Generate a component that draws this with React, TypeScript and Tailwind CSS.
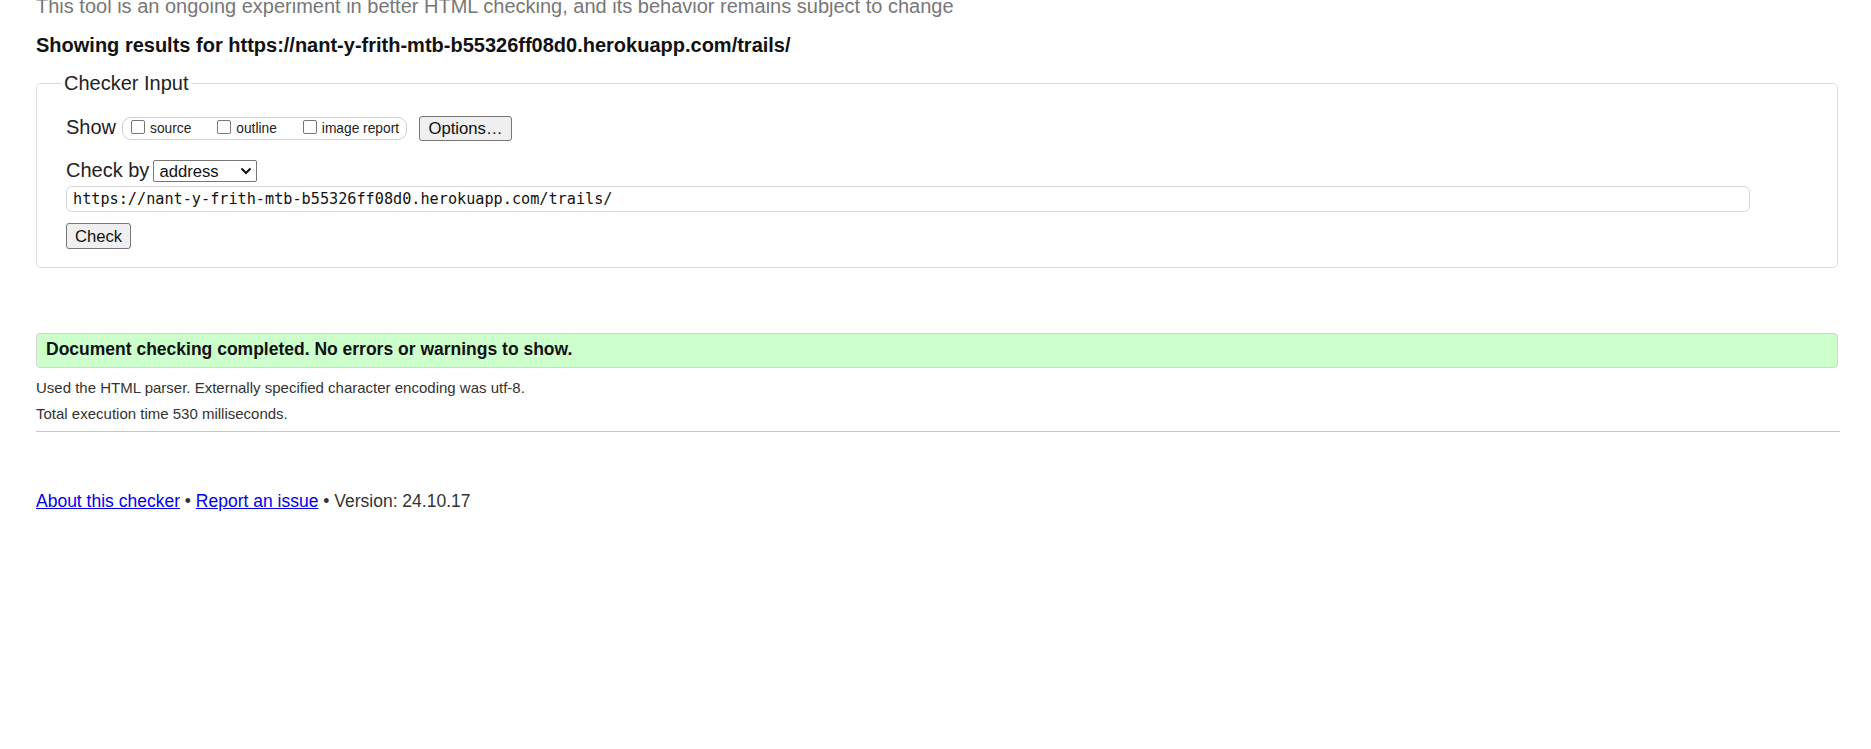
import React from 'react';

function Checkbox({ label, first }: { label: string; first?: boolean }) {
  return (
    <label className={`flex items-center ${first ? '' : 'ml-[26px]'}`}>
      <input
        type="checkbox"
        className="appearance-none m-0 mb-[3px] w-[14px] h-[14px] border border-[#767676] rounded-[2px] bg-white"
      />
      <span className="ml-[5px] text-[13.75px] leading-[16px] text-[#222]">{label}</span>
    </label>
  );
}

function Chevron() {
  return (
    <svg width="12" height="8" viewBox="0 0 12 8" className="ml-auto mr-[4px]">
      <polyline points="1.5,1.5 6,6 10.5,1.5" fill="none" stroke="#111" strokeWidth="2" />
    </svg>
  );
}

export default function App() {
  const url = 'https://nant-y-frith-mtb-b55326ff08d0.herokuapp.com/trails/';

  return (
    <div className="min-h-screen bg-white font-['Liberation_Sans',Arial,sans-serif] text-[#222] overflow-hidden">
      <div className="pl-[36px] w-[1840px]">
        <p className="-mt-[5px] text-[20px] leading-[22px] text-[#777]">
          This tool is an ongoing experiment in better HTML checking, and its behavior remains subject to change
        </p>

        <h2 className="mt-[17px] text-[20px] leading-[22px] font-bold text-[#111]">
          Showing results for {url}
        </h2>

        {/* Checker input */}
        <fieldset className="mt-[16px] w-[1802px] border border-[#dcdcdc] rounded-[5px] pl-[25px] pb-[18px]">
          <legend className="px-[2px] text-[20px] leading-[22px] text-[#222]">Checker Input</legend>

          <div className="ml-[4px] pt-[22px]">
            <div className="flex items-start h-[25px]">
              <span className="text-[20px] leading-[22px]">Show</span>
              <div className="ml-[6px] mt-[1px] h-[23px] flex items-center border border-[#cfcfcf] rounded-[9px] pl-[8px] pr-[7px]">
                <Checkbox label="source" first />
                <Checkbox label="outline" />
                <Checkbox label="image report" />
              </div>
              <button className="ml-[12px] w-[93px] h-[25px] flex items-center justify-center bg-[#efefef] border border-[#767676] rounded-[3px] text-[16.67px] leading-[19px] text-[#111]">
                Options…
              </button>
            </div>

            <div className="mt-[18px] flex items-start">
              <span className="text-[20px] leading-[22px]">Check by</span>
              <div className="ml-[4px] mt-[1px] w-[104px] h-[22px] flex items-center border border-[#767676] rounded-[2px] bg-white pl-[5px] text-[16.67px] leading-[19px] text-[#111]">
                address
                <Chevron />
              </div>
            </div>

            <div className="mt-[4px] w-[1684px] h-[26px] flex items-center border border-[#d6d6d6] rounded-[6px] pl-[6px] font-['DejaVu_Sans_Mono',monospace] text-[15.2px] text-[#111]">
              {url}
            </div>

            <button className="mt-[11px] w-[65px] h-[26px] flex items-center justify-center bg-[#efefef] border border-[#767676] rounded-[3px] text-[16.67px] leading-[19px] text-[#111]">
              Check
            </button>
          </div>
        </fieldset>

        {/* Result */}
        <div className="mt-[65px] w-[1802px] h-[35px] bg-[#ccffcc] border border-[#d4d4d4] rounded-[4px] pl-[9px] pt-[5px] text-[17.5px] leading-[20px] font-bold text-[#111]">
          Document checking completed. No errors or warnings to show.
        </div>

        <p className="mt-[10px] text-[15px] leading-[20px] text-[#333]">
          Used the HTML parser. Externally specified character encoding was utf-8.
        </p>
        <p className="mt-[6px] text-[15px] leading-[20px] text-[#333]">Total execution time 530 milliseconds.</p>

        <hr className="mt-[7px] border-0 border-t border-[#c8c8c8]" />

        <p className="mt-[59px] text-[17.5px] leading-[20px] text-[#333]">
          <a href="#" className="text-[#0000ee] underline">About this checker</a>
          {' • '}
          <a href="#" className="text-[#0000ee] underline">Report an issue</a>
          {' • Version: 24.10.17'}
        </p>
      </div>
    </div>
  );
}
